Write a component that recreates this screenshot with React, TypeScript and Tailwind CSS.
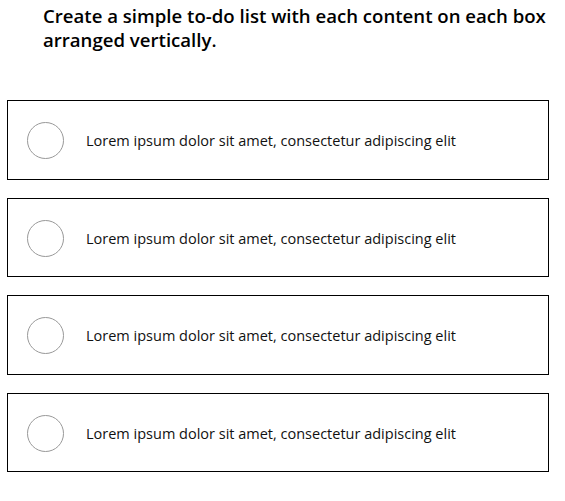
const items = [
  "Lorem ipsum dolor sit amet, consectetur adipiscing elit",
  "Lorem ipsum dolor sit amet, consectetur adipiscing elit",
  "Lorem ipsum dolor sit amet, consectetur adipiscing elit",
  "Lorem ipsum dolor sit amet, consectetur adipiscing elit",
];

export default function App() {
  return (
    <div className="min-h-screen bg-white text-black font-['Open_Sans',sans-serif]">
      <div className="pl-[43px] pr-[8px] pt-[4px]">
        <h1 className="text-[18.6px] leading-[24px] font-semibold">
          Create a simple to-do list with each content on each box arranged vertically.
        </h1>
      </div>
      <ul className="mt-[48px] ml-[7px] w-[542px] flex flex-col gap-[18px]">
        {items.map((text, i) => (
          <li key={i} className="h-[79.5px] border border-black flex items-center pl-[19px]">
            <span className="w-[37px] h-[37px] rounded-full border border-[#999] shrink-0 mt-[2px]" />
            <span className="ml-[22px] mt-[3px] text-[14.5px] text-[#111]">{text}</span>
          </li>
        ))}
      </ul>
    </div>
  );
}
